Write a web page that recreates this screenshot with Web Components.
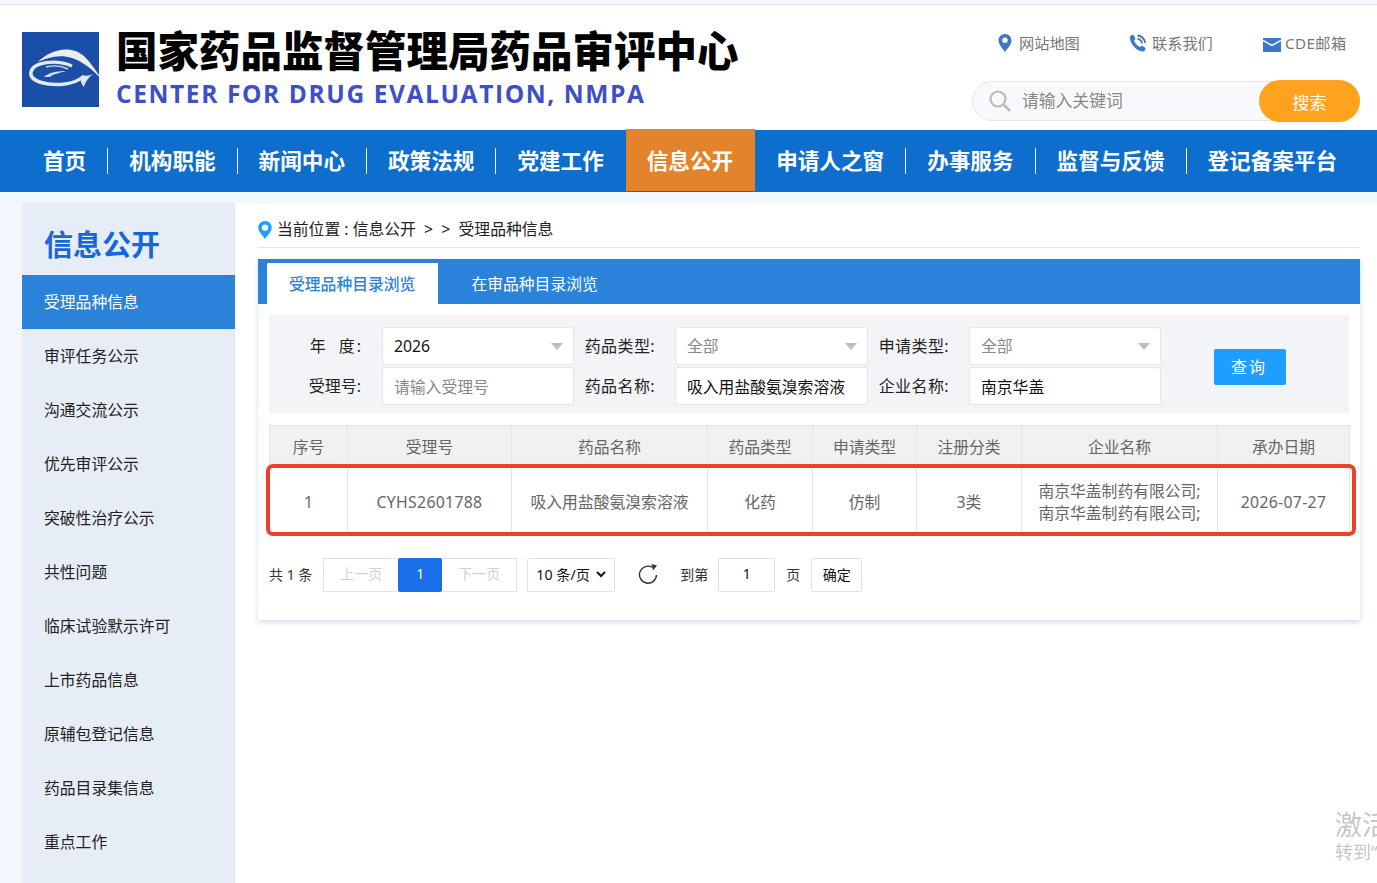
<!DOCTYPE html>
<html lang="zh">
<head>
<meta charset="utf-8">
<title>受理品种信息</title>
<style>
  html, body { margin: 0; height: 883px; overflow: hidden; }
  body { background: #f2f7ff; font-family: "Noto Sans", "Noto Sans CJK SC", sans-serif; color: #333; }
</style>
</head>
<body>
<cde-header></cde-header>
<cde-nav>
  <nav-item>首页</nav-item>
  <nav-item>机构职能</nav-item>
  <nav-item>新闻中心</nav-item>
  <nav-item>政策法规</nav-item>
  <nav-item>党建工作</nav-item>
  <nav-item active>信息公开</nav-item>
  <nav-item nosep>申请人之窗</nav-item>
  <nav-item>办事服务</nav-item>
  <nav-item>监督与反馈</nav-item>
  <nav-item>登记备案平台</nav-item>
</cde-nav>
<cde-layout>
  <cde-sidebar slot="side" heading="信息公开">
    <side-item active>受理品种信息</side-item>
    <side-item>审评任务公示</side-item>
    <side-item>沟通交流公示</side-item>
    <side-item>优先审评公示</side-item>
    <side-item>突破性治疗公示</side-item>
    <side-item>共性问题</side-item>
    <side-item>临床试验默示许可</side-item>
    <side-item>上市药品信息</side-item>
    <side-item>原辅包登记信息</side-item>
    <side-item>药品目录集信息</side-item>
    <side-item>重点工作</side-item>
  </cde-sidebar>
  <cde-crumb></cde-crumb>
  <cde-card>
    <cde-tabs></cde-tabs>
    <cde-filter></cde-filter>
    <cde-table></cde-table>
    <cde-pager></cde-pager>
  </cde-card>
</cde-layout>
<win-mark></win-mark>

<script>
const FONT = '"Noto Sans", "Noto Sans CJK SC", sans-serif';

class CdeHeader extends HTMLElement {
  connectedCallback() {
    this.attachShadow({ mode: 'open' });
    this.shadowRoot.innerHTML = `
      <style>
        :host { display: flex; box-sizing: border-box; height: 126px; margin-top: 4px; background: #fff; border-top: 1px solid #e8e8e8; padding: 0 17px 0 22px; justify-content: space-between; }
        .brand { display: flex; padding-top: 27px; }
        .logo { width: 77px; height: 75px; display: block; }
        .names { margin-left: 17px; margin-top: -6px; }
        .cn { font-size: 41.5px; line-height: 50px; font-weight: 900; color: #000; white-space: nowrap; }
        .en { font-family: "Open Sans", sans-serif; font-size: 24.5px; line-height: 30px; margin-top: 3px; font-weight: 700; color: #3d4fc9; letter-spacing: 1.6px; white-space: nowrap; }
        .tools { width: 388px; }
        .links { position: relative; height: 76px; font-size: 15.2px; color: #777; line-height: 26px; }
        .links span { display: flex; align-items: center; white-space: nowrap; position: absolute; top: 25px; }
        .l1 { left: 26px; } .l2 { left: 157px; } .l3 { left: 291px; letter-spacing: .4px; }
        .links svg { display: block; margin-right: 7px; }
        .search { display: flex; align-items: center; height: 40px; box-sizing: border-box; border: 1px solid #e5e5e5; border-radius: 20px; background: #f8f9fd; padding-left: 16px; position: relative; }
        .search .ph { margin: -2px 0 0 11px; font-size: 16.8px; color: #888; }
        .go { position: absolute; right: -1px; top: -2px; width: 101px; height: 42px; border-radius: 21px; background: #ffa31f; color: #fff; font-size: 17px; display: flex; align-items: center; justify-content: center; }
      </style>
      <div class="brand">
        <svg class="logo" viewBox="0 0 77 75">
          <rect width="77" height="75" fill="#1b4ea6"/>
          <path d="M16 30C28 17 50 12 63 25C69 31 75 40 80 48C72 39 62 30 50 26C38 22 26 25 16 30Z" fill="#e9eef6"/>
          <path d="M50 34C34 27 11 30 9 40C7 50 27 54 43 52C50 51 56 49 61 45" fill="none" stroke="#e4e9f2" stroke-width="3.4"/>
          <path d="M60 43C57 48 60 53 62 55C63 50 66 46 71 42C67 44 64 44 60 43Z" fill="#dfe6f1"/>
          <path d="M22 45C26 41 34 39 44 39C38 41 31 42 28 45Z" fill="#cfdaea"/>
          <path d="M24 35C32 33 40 34 46 37" fill="none" stroke="#cfdaea" stroke-width="1.4"/>
        </svg>
        <div class="names">
          <div class="cn">国家药品监督管理局药品审评中心</div>
          <div class="en">CENTER FOR DRUG EVALUATION, NMPA</div>
        </div>
      </div>
      <div class="tools">
        <div class="links">
          <span class="l1"><svg width="14" height="18" viewBox="0 0 14 18"><path d="M7 0C3 0 .5 3 .5 6.400C.5 10.500 5 15 7 18C9 15 13.500 10.500 13.500 6.400C13.500 3 11 0 7 0ZM7 9A2.700 2.700 0 1 1 7 3.600A2.700 2.700 0 0 1 7 9Z" fill="#3d77c9"/></svg>网站地图</span>
          <span class="l2"><svg width="18" height="18" viewBox="0 0 18 18" style="margin-right:5px"><path d="M1 2.500C2 1 3.500 .5 4.500 1L6.500 4.500L5 6.500C5.500 8.500 8.500 12 11 13L13 11.500L16.500 14C17 15.500 15.500 17.500 13.500 17.500C7.500 17 .5 9.500 1 2.500Z" fill="#3d77c9"/><path d="M8.500 1.500C12.500 2 15.500 4.800 16 9M8.500 4.800C11 5.200 12.700 7 13 9.500" fill="none" stroke="#3d77c9" stroke-width="1.800"/></svg>联系我们</span>
          <span class="l3"><svg width="18" height="14" viewBox="0 0 18 14" style="margin-right:4px;margin-top:3px"><path d="M0 0H18V14H0Z" fill="#3d77c9"/><path d="M0 2.500L9 7.500L18 2.500" fill="none" stroke="#fff" stroke-width="1.500"/></svg>CDE邮箱</span>
        </div>
        <div class="search">
          <svg width="22" height="22" viewBox="0 0 22 22"><circle cx="9" cy="9" r="7.500" fill="none" stroke="#bbb" stroke-width="2.200"/><path d="M15 15L21 21" stroke="#bbb" stroke-width="2.600"/></svg>
          <span class="ph">请输入关键词</span>
          <span class="go">搜索</span>
        </div>
      </div>`;
  }
}
customElements.define('cde-header', CdeHeader);

class CdeNav extends HTMLElement {
  connectedCallback() {
    this.attachShadow({ mode: 'open' });
    this.shadowRoot.innerHTML = `
      <style>
        :host { display: flex; height: 62px; background: #0d6ecd; padding-left: 22px; align-items: center; }
      </style>
      <slot></slot>`;
  }
}
customElements.define('cde-nav', CdeNav);

class NavItem extends HTMLElement {
  connectedCallback() {
    this.attachShadow({ mode: 'open' });
    this.shadowRoot.innerHTML = `
      <style>
        :host { display: block; position: relative; padding: 0 21px; margin-right: 1px; font-size: 21.6px; font-weight: 700; line-height: 26px; color: #fff; white-space: nowrap; }
        :host(:not(:first-child):not([active]):not([nosep]))::before { content: ""; position: absolute; left: -1px; top: 0; height: 26px; border-left: 1px solid #fff; }
        :host([active]) { background: #e3832b; height: 62px; line-height: 64px; align-self: flex-start; margin: -1px 0 0; padding-right: 22px; }
      </style>
      <slot></slot>`;
  }
}
customElements.define('nav-item', NavItem);

class CdeLayout extends HTMLElement {
  connectedCallback() {
    this.attachShadow({ mode: 'open' });
    this.shadowRoot.innerHTML = `
      <style>
        :host { display: flex; height: 680px; margin-top: 11px; padding-left: 22px; }
        main { flex: 1; background: #fff; padding: 0 17px 0 23px; min-width: 0; }
      </style>
      <slot name="side"></slot>
      <main><slot></slot></main>`;
  }
}
customElements.define('cde-layout', CdeLayout);

class CdeSidebar extends HTMLElement {
  connectedCallback() {
    this.attachShadow({ mode: 'open' });
    this.shadowRoot.innerHTML = `
      <style>
        :host { display: block; width: 213px; background: #e7edf6; flex: none; overflow: hidden; }
        h2 { margin: 0; height: 72px; box-sizing: border-box; padding: 22px 0 0 22px; font-size: 29px; line-height: 40px; font-weight: 700; color: #1667d9; }
      </style>
      <h2>${this.getAttribute('heading')}</h2>
      <slot></slot>`;
  }
}
customElements.define('cde-sidebar', CdeSidebar);

class SideItem extends HTMLElement {
  connectedCallback() {
    this.attachShadow({ mode: 'open' });
    this.shadowRoot.innerHTML = `
      <style>
        :host { display: block; height: 54px; line-height: 54px; padding-left: 22px; font-size: 15.8px; color: #222; }
        :host([active]) { background: #2b82d9; color: #fff; }
      </style>
      <slot></slot>`;
  }
}
customElements.define('side-item', SideItem);

class CdeCrumb extends HTMLElement {
  connectedCallback() {
    this.attachShadow({ mode: 'open' });
    this.shadowRoot.innerHTML = `
      <style>
        :host { display: flex; align-items: center; height: 45px; box-sizing: border-box; padding-top: 6px; border-bottom: 1px solid #e5e5e5; font-size: 15.8px; color: #222; white-space: pre; }
        svg { display: block; margin: 3px 5px 0 0; }
      </style>
      <svg width="14" height="18" viewBox="0 0 14 18"><path d="M7 0C3 0 .3 3 .3 6.600C.3 10.800 5 15 7 18C9 15 13.700 10.800 13.700 6.600C13.700 3 11 0 7 0ZM7 9.800A3.200 3.200 0 1 1 7 3.400A3.200 3.200 0 0 1 7 9.800Z" fill="#1e9fff"/></svg>
      <span>当前位置 : 信息公开  &gt;  &gt;  受理品种信息</span>`;
  }
}
customElements.define('cde-crumb', CdeCrumb);

class CdeCard extends HTMLElement {
  connectedCallback() {
    this.attachShadow({ mode: 'open' });
    this.shadowRoot.innerHTML = `
      <style>
        :host { display: block; margin-top: 11px; height: 361px; background: #fff; box-shadow: 0 2px 6px rgba(120,150,190,.35); }
      </style>
      <slot></slot>`;
  }
}
customElements.define('cde-card', CdeCard);

class CdeTabs extends HTMLElement {
  connectedCallback() {
    this.attachShadow({ mode: 'open' });
    this.shadowRoot.innerHTML = `
      <style>
        :host { display: flex; height: 45px; box-sizing: border-box; padding: 4px 0 0 9px; background: #2b82d9; font-size: 15.8px; color: #fff; }
        div { line-height: 42px; padding: 0 23px 0 22px; }
        .on { background: #fff; color: #2b82d9; font-weight: 500; }
        .off { padding-left: 33px; }
      </style>
      <div class="on">受理品种目录浏览</div>
      <div class="off">在审品种目录浏览</div>`;
  }
}
customElements.define('cde-tabs', CdeTabs);

class CdeFilter extends HTMLElement {
  connectedCallback() {
    const sel = (t, cls) => `<div class="field ${cls}">${t}<i></i></div>`;
    this.attachShadow({ mode: 'open' });
    this.shadowRoot.innerHTML = `
      <style>
        :host { display: grid; grid-template-columns: 113px 192px 101px 193px 101px 192px 1fr; grid-auto-rows: 38px; row-gap: 2px; box-sizing: border-box; height: 98px; margin: 11px 11px 0; padding-top: 12px; background: #f3f4f8; font-size: 16px; }
        label { text-align: right; padding-right: 20px; line-height: 38px; color: #222; white-space: nowrap; letter-spacing: .4px; }
        label.first { padding-right: 21px; letter-spacing: 0; }
        label b { font-weight: 400; margin-left: 13px; margin-right: 2px; }
        .field { position: relative; box-sizing: border-box; border: 1px solid #e6e6e6; border-radius: 3px; background: #fff; padding-left: 11px; line-height: 36px; font-size: 15.8px; color: #111; white-space: nowrap; }
        .gray { color: #888; }
        .text { line-height: 38px; }
        i { position: absolute; right: 10px; top: 15px; border: 6px solid transparent; border-top: 7px solid #bdbdbd; border-bottom: 0; }
        .field.text i { display: none; }
        button { grid-column: 7; grid-row: 1 / span 2; align-self: center; justify-self: start; margin: 2px 0 0 53px; width: 72px; height: 36px; padding: 0 2px 2px 0; border: 0; border-radius: 2px; background: #1e9fff; color: #fff; font: 16px ${FONT}; letter-spacing: 2px; }
      </style>
      <label class="first">年<b>度</b>:</label>${sel('2026', '')}
      <label>药品类型:</label>${sel('全部', 'gray')}
      <label>申请类型:</label>${sel('全部', 'gray')}
      <button>查询</button>
      <label class="first">受理号:</label>${sel('请输入受理号', 'text gray')}
      <label>药品名称:</label>${sel('吸入用盐酸氨溴索溶液', 'text')}
      <label>企业名称:</label>${sel('南京华盖', 'text')}`;
  }
}
customElements.define('cde-filter', CdeFilter);

class CdeTable extends HTMLElement {
  connectedCallback() {
    this.attachShadow({ mode: 'open' });
    this.shadowRoot.innerHTML = `
      <style>
        :host { display: block; position: relative; margin: 12px 11px 0; font-size: 15.8px; color: #666; }
        table { width: 1080px; border-collapse: collapse; table-layout: fixed; }
        th, td { border: 1px solid #e5e5e5; text-align: center; padding: 0; font-weight: 400; box-sizing: border-box; }
        th { height: 41px; background: #f1f1f1; }
        td { height: 66px; line-height: 22px; padding-top: 4px; }
        .num { letter-spacing: .3px; }
        .mark { position: absolute; left: -3px; right: -7px; top: 39px; height: 72px; box-sizing: border-box; border: 4px solid #ee4027; border-radius: 7px; }
      </style>
      <table>
        <colgroup><col style="width:78px"><col style="width:164px"><col style="width:196px"><col style="width:105px"><col style="width:104px"><col style="width:105px"><col style="width:196px"><col style="width:132px"></colgroup>
        <tr><th>序号</th><th>受理号</th><th>药品名称</th><th>药品类型</th><th>申请类型</th><th>注册分类</th><th>企业名称</th><th>承办日期</th></tr>
        <tr><td>1</td><td class="num">CYHS2601788</td><td>吸入用盐酸氨溴索溶液</td><td>化药</td><td>仿制</td><td>3类</td><td>南京华盖制药有限公司;<br>南京华盖制药有限公司;</td><td class="num">2026-07-27</td></tr>
      </table>
      <div class="mark"></div>`;
  }
}
customElements.define('cde-table', CdeTable);

class CdePager extends HTMLElement {
  connectedCallback() {
    this.attachShadow({ mode: 'open' });
    this.shadowRoot.innerHTML = `
      <style>
        :host { display: flex; align-items: center; height: 34px; margin: 25px 11px 0; font-size: 14px; color: #333; white-space: nowrap; }
        .txt { margin-top: -2px; }
        .btns { display: flex; margin-left: 11px; height: 34px; border: 1px solid #e2e2e2; box-sizing: border-box; }
        .btns span { width: 74px; line-height: 30px; text-align: center; color: #d2d2d2; }
        .btns .cur { width: 44px; margin: -1px 0; height: 34px; line-height: 32px; background: #1a6fe8; color: #fff; border-radius: 2px; }
        .size { display: flex; align-items: center; justify-content: space-between; box-sizing: border-box; width: 88px; height: 34px; margin-left: 10px; padding: 0 7px 2px 8px; border: 1px solid #e2e2e2; border-radius: 2px; color: #111; font-size: 14.2px; }
        .refresh { display: block; margin: 0 22px 2px 23px; }
        .box { box-sizing: border-box; height: 34px; line-height: 30px; border: 1px solid #e2e2e2; border-radius: 2px; text-align: center; color: #111; }
        .num { width: 57px; margin: 0 11px 0 10px; }
        .ok { width: 51px; margin-left: 11px; font-size: 14px; line-height: 32px; }
      </style>
      <span class="txt">共 1 条</span>
      <div class="btns"><span>上一页</span><span class="cur">1</span><span>下一页</span></div>
      <div class="size">10 条/页<svg width="12" height="8" viewBox="0 0 12 8"><path d="M2 2L6 6L10 2" fill="none" stroke="#111" stroke-width="2"/></svg></div>
      <svg class="refresh" width="20" height="20" viewBox="0 0 20 20"><path d="M14 3.200A8.500 8.500 0 1 0 18.500 11" fill="none" stroke="#333" stroke-width="1.400"/><path d="M13.500 0L19 1.500L15 6.500Z" fill="#333"/></svg>
      <span class="txt">到第</span>
      <div class="box num">1</div>
      <span class="txt">页</span>
      <div class="box ok">确定</div>`;
  }
}
customElements.define('cde-pager', CdePager);

class WinMark extends HTMLElement {
  connectedCallback() {
    this.attachShadow({ mode: 'open' });
    this.shadowRoot.innerHTML = `
      <style>
        :host { position: fixed; left: 1335px; top: 808px; right: 0; overflow: hidden; color: #c6c6c6; white-space: nowrap; pointer-events: none; }
        .big { font-size: 27px; line-height: 34px; }
        .small { font-size: 18px; line-height: 20px; }
      </style>
      <div class="big">激活</div>
      <div class="small">转到“</div>`;
  }
}
customElements.define('win-mark', WinMark);
</script>
</body>
</html>
